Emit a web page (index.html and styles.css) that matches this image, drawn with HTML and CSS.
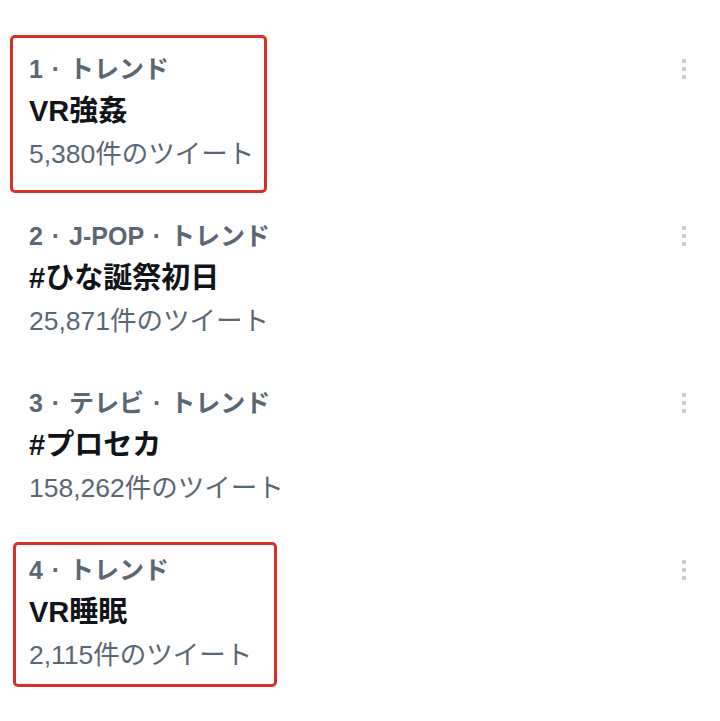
FILE: index.html
```html
<!DOCTYPE html>
<html lang="ja">
<head>
<meta charset="utf-8">
<link rel="stylesheet" href="styles.css">
</head>
<body>
<ul class="trends">
  <li class="trend">
    <div class="mark mark-a"></div>
    <div class="meta"><span>1 · トレンド</span><svg class="kebab" width="6" height="22" viewBox="0 0 6 22"><circle cx="3" cy="3" r="2.3"/><circle cx="3" cy="11" r="2.3"/><circle cx="3" cy="19" r="2.3"/></svg></div>
    <div class="title">VR強姦</div>
    <div class="count">5,380件のツイート</div>
  </li>
  <li class="trend">
    <div class="meta"><span>2 · J-POP · トレンド</span><svg class="kebab" width="6" height="22" viewBox="0 0 6 22"><circle cx="3" cy="3" r="2.3"/><circle cx="3" cy="11" r="2.3"/><circle cx="3" cy="19" r="2.3"/></svg></div>
    <div class="title">#ひな誕祭初日</div>
    <div class="count">25,871件のツイート</div>
  </li>
  <li class="trend">
    <div class="meta"><span>3 · テレビ · トレンド</span><svg class="kebab" width="6" height="22" viewBox="0 0 6 22"><circle cx="3" cy="3" r="2.3"/><circle cx="3" cy="11" r="2.3"/><circle cx="3" cy="19" r="2.3"/></svg></div>
    <div class="title">#プロセカ</div>
    <div class="count">158,262件のツイート</div>
  </li>
  <li class="trend">
    <div class="mark mark-b"></div>
    <div class="meta"><span>4 · トレンド</span><svg class="kebab" width="6" height="22" viewBox="0 0 6 22"><circle cx="3" cy="3" r="2.3"/><circle cx="3" cy="11" r="2.3"/><circle cx="3" cy="19" r="2.3"/></svg></div>
    <div class="title">VR睡眠</div>
    <div class="count">2,115件のツイート</div>
  </li>
</ul>
</body>
</html>
```
FILE: styles.css
```css
html, body {
  margin: 0;
  padding: 0;
  background: #ffffff;
}
body {
  width: 720px;
  height: 721px;
  overflow: hidden;
  font-family: "Liberation Sans", "Noto Sans CJK JP", sans-serif;
}
.trends {
  list-style: none;
  margin: 0;
  padding: 28px 0 0 0;
}
.trend {
  position: relative;
  display: flex;
  flex-direction: column;
  padding: 19px 33px 19px 29px;
}
.meta {
  display: flex;
  justify-content: space-between;
  align-items: center;
  box-sizing: border-box;
  height: 43px;
  padding-bottom: 4px;
  font-size: 25px;
  font-weight: 700;
  word-spacing: 2px;
  color: #5b6874;
  white-space: pre;
}
.kebab {
  fill: #c8ccd0;
  display: block;
  margin-top: 4px;
}
.title {
  height: 43px;
  line-height: 43px;
  font-size: 29px;
  font-weight: 700;
  color: #111418;
}
.count {
  height: 43px;
  line-height: 43px;
  font-size: 26.5px;
  color: #5b6874;
}
.mark {
  position: absolute;
  border: 3.5px solid #d7302b;
  border-radius: 5px;
  box-sizing: border-box;
  pointer-events: none;
}
.mark-a {
  left: 10px;
  top: 7px;
  width: 257px;
  height: 158px;
}
.mark-b {
  left: 13px;
  top: 13px;
  width: 264px;
  height: 145px;
}
```
